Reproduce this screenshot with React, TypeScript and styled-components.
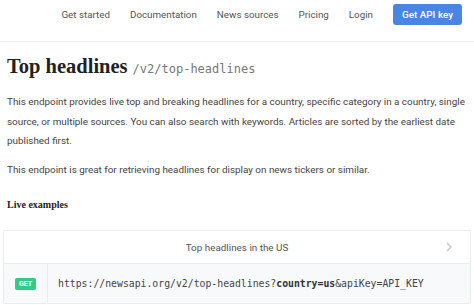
import React from 'react';
import styled, { createGlobalStyle } from 'styled-components';

const GlobalStyle = createGlobalStyle`
  body {
    margin: 0;
    background: #fff;
    font-family: Roboto, "Liberation Sans", sans-serif;
    color: #333;
  }
`;

const Header = styled.header`
  height: 42px;
  border-bottom: 1px solid #eeeeee;
  display: flex;
  align-items: flex-start;
  justify-content: flex-end;
  padding: 4px 12px 0 0;
  box-sizing: border-box;
`;

const Nav = styled.nav`
  display: flex;
  align-items: center;
  gap: 20px;
  height: 21px;
`;

const NavItem = styled.a`
  font-size: 9.8px;
  color: #555;
  text-decoration: none;
`;

const ApiButton = styled.a`
  font-size: 9.9px;
  font-weight: 500;
  color: #fff;
  background: #4a85e3;
  border-radius: 3px;
  height: 21px;
  padding: 0 9px;
  display: flex;
  align-items: center;
  text-decoration: none;
`;

const Main = styled.main`
  padding: 0 7px;
`;

const Title = styled.h1`
  margin: 13px 0 0;
  display: flex;
  align-items: baseline;
  gap: 5px;
  font-family: "Liberation Serif", serif;
  font-size: 20.5px;
  font-weight: 700;
  color: #222;
`;

const Path = styled.span`
  font-family: "DejaVu Sans Mono", monospace;
  font-size: 12px;
  font-weight: 400;
  color: #777;
`;

const Text = styled.p`
  margin: 14px 0 0;
  font-size: 9.9px;
  line-height: 19.5px;
  color: #444;
  & + & {
    margin-top: 9px;
  }
`;

const Subtitle = styled.h3`
  margin: 20px 0 0;
  font-family: "Liberation Serif", serif;
  font-size: 10px;
  font-weight: 700;
  color: #222;
`;

const Card = styled.div`
  margin: 20px -4px 0;
  border: 1px solid #ececec;
  border-radius: 2px;
`;

const CardHead = styled.div`
  height: 32px;
  display: flex;
  align-items: center;
  justify-content: center;
  position: relative;
  font-size: 9.9px;
  color: #555;
  border-bottom: 1px solid #ececec;
`;

const Chevron = styled.svg`
  position: absolute;
  right: 18px;
  top: 11px;
`;

const Row = styled.div`
  display: flex;
  height: 39px;
  background: #f8f9fa;
`;

const MethodCell = styled.div`
  width: 43px;
  display: flex;
  align-items: center;
  justify-content: center;
  border-right: 1px solid #ececec;
`;

const Method = styled.span`
  background: #2ecc87;
  color: #fff;
  font-size: 7px;
  font-weight: 700;
  padding: 2px 4px;
  border-radius: 2px;
`;

const Url = styled.code`
  flex: 1;
  display: flex;
  align-items: center;
  padding-left: 10px;
  font-family: "DejaVu Sans Mono", monospace;
  font-size: 9.8px;
  color: #444;
  white-space: pre;
  b {
    color: #333;
  }
`;

export default function App() {
  return (
    <>
      <GlobalStyle />
      <Header>
        <Nav>
          <NavItem>Get started</NavItem>
          <NavItem>Documentation</NavItem>
          <NavItem>News sources</NavItem>
          <NavItem>Pricing</NavItem>
          <NavItem>Login</NavItem>
          <ApiButton>Get API key</ApiButton>
        </Nav>
      </Header>
      <Main>
        <Title>
          Top headlines <Path>/v2/top-headlines</Path>
        </Title>
        <Text>
          This endpoint provides live top and breaking headlines for a country, specific category in a country, single
          source, or multiple sources. You can also search with keywords. Articles are sorted by the earliest date
          published first.
        </Text>
        <Text>This endpoint is great for retrieving headlines for display on news tickers or similar.</Text>
        <Subtitle>Live examples</Subtitle>
        <Card>
          <CardHead>
            Top headlines in the US
            <Chevron width="6" height="10" viewBox="0 0 6 10">
              <path d="M1 1l4 4-4 4" fill="none" stroke="#c8c8c8" strokeWidth="1.5" />
            </Chevron>
          </CardHead>
          <Row>
            <MethodCell>
              <Method>GET</Method>
            </MethodCell>
            <Url>
              https://newsapi.org/v2/top-headlines?<b>country=us</b>&amp;apiKey=API_KEY
            </Url>
          </Row>
        </Card>
      </Main>
    </>
  );
}
